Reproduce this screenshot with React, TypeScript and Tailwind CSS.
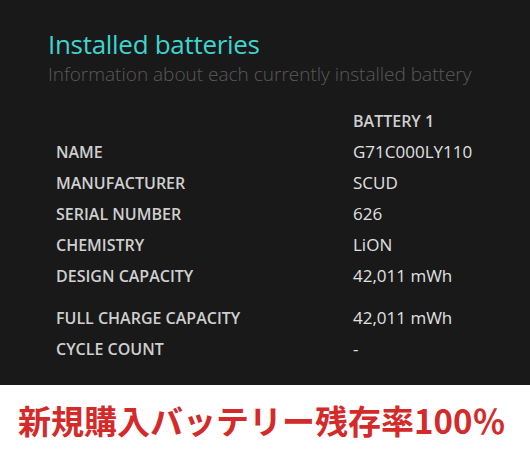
import React from "react";

const rows: { label: string; value: string; extra?: boolean }[] = [
  { label: "NAME", value: "G71C000LY110" },
  { label: "MANUFACTURER", value: "SCUD" },
  { label: "SERIAL NUMBER", value: "626" },
  { label: "CHEMISTRY", value: "LiON" },
  { label: "DESIGN CAPACITY", value: "42,011 mWh", extra: true },
  { label: "FULL CHARGE CAPACITY", value: "42,011 mWh" },
  { label: "CYCLE COUNT", value: "-" },
];

export default function App() {
  return (
    <div className="w-[530px] h-[455px] overflow-hidden bg-white">
      <div
        className="h-[385px] bg-[#191919] pt-[27px] pl-[48px]"
        style={{ fontFamily: '"Open Sans", "Noto Sans", sans-serif' }}
      >
        <div className="text-[26px] leading-[34px] text-[#3ed4cf] font-medium tracking-[-0.3px] whitespace-nowrap">
          Installed batteries
        </div>
        <div className="text-[19px] leading-[26px] text-[#5a5a5a] font-light whitespace-nowrap">
          Information about each currently installed battery
        </div>
        <div className="mt-[18px] pl-[8px]">
          <div className="flex h-[31px] items-center">
            <div className="w-[297px]" />
            <div className="text-[16px] font-semibold text-[#cfcfcf]">BATTERY 1</div>
          </div>
          {rows.map((r) => (
            <div
              key={r.label}
              className={`flex items-center ${r.extra ? "h-[31px] mb-[11px]" : "h-[31px]"}`}
            >
              <div className="w-[297px] text-[16px] font-semibold text-[#cfcfcf] whitespace-nowrap">
                {r.label}
              </div>
              <div className="text-[17px] text-[#e0e0e0] whitespace-nowrap">{r.value}</div>
            </div>
          ))}
        </div>
      </div>
      <div className="h-[70px] flex items-center pl-[18px]">
        <div
          className="text-[33px] font-bold text-[#d42a2a] leading-none whitespace-nowrap"
          style={{ fontFamily: '"Noto Sans CJK JP", sans-serif' }}
        >
          新規購入バッテリー残存率100％
        </div>
      </div>
    </div>
  );
}
